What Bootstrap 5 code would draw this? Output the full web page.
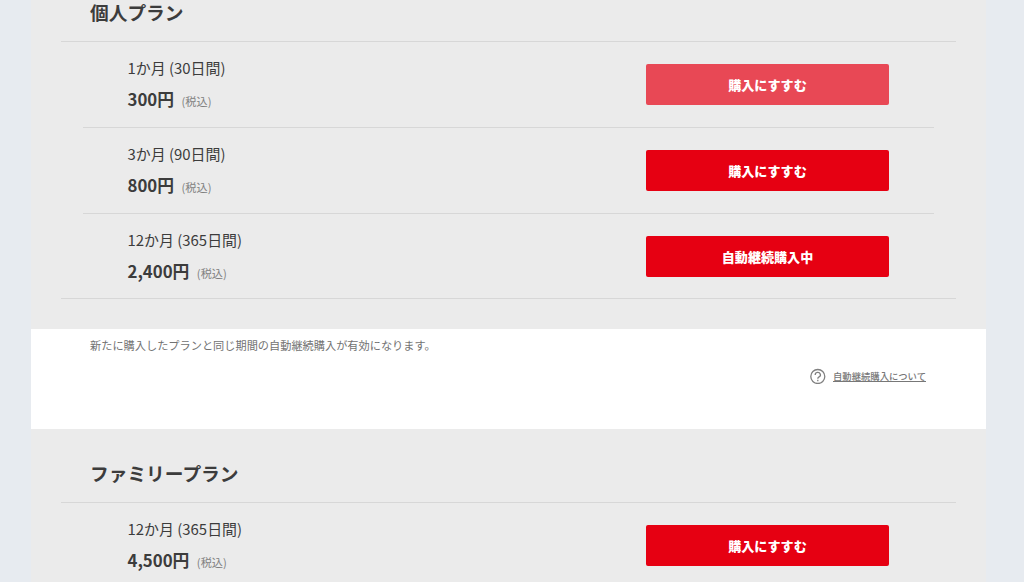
<!DOCTYPE html>
<html lang="ja">
<head>
  <meta charset="UTF-8">
  <meta name="viewport" content="width=device-width, initial-scale=1">
  <title>プラン購入</title>
  <link href="https://cdn.jsdelivr.net/npm/bootstrap@5.3.2/dist/css/bootstrap.min.css" rel="stylesheet">
  <style>
    body {
      background: #e7ebf0;
      color: #3c3c3c;
      font-family: "Noto Sans CJK JP", sans-serif;
    }
    .plan-page {
      width: 955px;
      margin-left: 31px;
      background: #ebebeb;
    }
    .plan-section {
      padding: 0 30px 29.75px 29.5px;
    }
    .plan-section-last {
      padding-bottom: 0;
    }
    .plan-head {
      height: 73px;
      padding: 0 30px 15px 29.5px;
    }
    .plan-head-top {
      height: 41px;
    }
    .plan-head h2 {
      font-size: 18.72px;
      line-height: 28px;
    }
    .plan-list {
      border-top: 1px solid #d7d7d7;
      padding: 0 22.5px;
    }
    .plan-list-end {
      border-bottom: 1px solid #d7d7d7;
    }
    .plan-item {
      height: 85.75px;
      padding: 0.9px 44.5px 0;
      border-bottom: 1px solid #d7d7d7;
    }
    .plan-item:last-child {
      height: 84.75px;
      border-bottom: 0;
    }
    .plan-text {
      padding-top: 2.2px;
    }
    .plan-name {
      font-size: 14.93px;
      line-height: 22px;
      margin-bottom: 8px;
    }
    .plan-price {
      font-size: 16.8px;
      line-height: 25px;
    }
    .plan-tax {
      font-size: 11.2px;
      color: #808080;
      margin-left: 7.5px;
    }
    .btn-buy {
      --bs-btn-color: #fff;
      --bs-btn-bg: #e60012;
      --bs-btn-hover-color: #fff;
      --bs-btn-hover-bg: #e84855;
      width: 243px;
      height: 41px;
      border: 0;
      border-radius: 2px;
      font-size: 13.07px;
      font-weight: 900;
    }
    .btn-buy-hover {
      --bs-btn-bg: #e84855;
    }
    .plan-note {
      height: 100px;
      padding: 8px 60px 0 59px;
      color: #727272;
      font-size: 11.2px;
      line-height: 17px;
    }
    .plan-help {
      color: #777;
      font-size: 9.33px;
      font-weight: 500;
      line-height: 16px;
      margin-top: 14px;
    }
    .plan-help svg {
      margin-right: 7px;
    }
  </style>
</head>
<body>
<main class="plan-page vh-100 overflow-hidden">
  <!-- Personal plan -->
  <section class="plan-section">
    <div class="plan-head plan-head-top d-flex align-items-end">
      <h2 class="fw-bold mb-0">個人プラン</h2>
    </div>
    <div class="plan-list plan-list-end">
      <div class="plan-item d-flex justify-content-between align-items-center">
        <div class="plan-text">
          <div class="plan-name">1か月 (30日間)</div>
          <div class="plan-price"><b>300円</b><span class="plan-tax">(税込)</span></div>
        </div>
        <button type="button" class="btn btn-buy btn-buy-hover">購入にすすむ</button>
      </div>
      <div class="plan-item d-flex justify-content-between align-items-center">
        <div class="plan-text">
          <div class="plan-name">3か月 (90日間)</div>
          <div class="plan-price"><b>800円</b><span class="plan-tax">(税込)</span></div>
        </div>
        <button type="button" class="btn btn-buy">購入にすすむ</button>
      </div>
      <div class="plan-item d-flex justify-content-between align-items-center">
        <div class="plan-text">
          <div class="plan-name">12か月 (365日間)</div>
          <div class="plan-price"><b>2,400円</b><span class="plan-tax">(税込)</span></div>
        </div>
        <button type="button" class="btn btn-buy">自動継続購入中</button>
      </div>
    </div>
  </section>

  <!-- Auto renewal note -->
  <section class="plan-note bg-white">
    <p class="mb-0">新たに購入したプランと同じ期間の自動継続購入が有効になります。</p>
    <div class="d-flex justify-content-end">
      <a href="#" class="plan-help d-flex align-items-center">
        <svg width="16" height="16" viewBox="0 0 16 16" fill="none" stroke="#808080" stroke-width="1.3">
          <circle cx="7.8" cy="8.5" r="7"/>
          <path d="M5.2 6.9a2.6 2.4 0 1 1 3.9 2C8.2 9.4 7.8 9.8 7.8 10.7"/>
          <path d="M7.8 11.8v1.4"/>
        </svg>
        <span>自動継続購入について</span>
      </a>
    </div>
  </section>

  <!-- Family plan -->
  <section class="plan-section plan-section-last">
    <div class="plan-head d-flex align-items-end">
      <h2 class="fw-bold mb-0">ファミリープラン</h2>
    </div>
    <div class="plan-list">
      <div class="plan-item d-flex justify-content-between align-items-center">
        <div class="plan-text">
          <div class="plan-name">12か月 (365日間)</div>
          <div class="plan-price"><b>4,500円</b><span class="plan-tax">(税込)</span></div>
        </div>
        <button type="button" class="btn btn-buy">購入にすすむ</button>
      </div>
    </div>
  </section>
</main>
<script src="https://cdn.jsdelivr.net/npm/bootstrap@5.3.2/dist/js/bootstrap.bundle.min.js"></script>
</body>
</html>
